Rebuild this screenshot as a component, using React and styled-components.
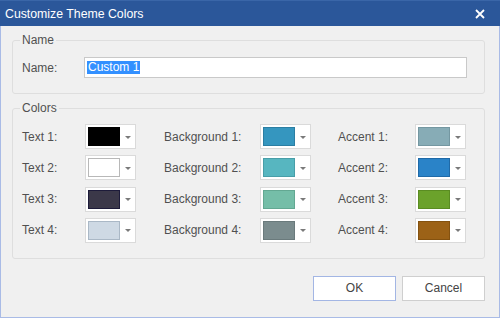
import React from "react";
import styled, { createGlobalStyle } from "styled-components";

const GlobalStyle = createGlobalStyle`
    html, body {
        margin: 0;
        padding: 0;
        background: #f0f0f0;
    }
    body {
        font-family: "Liberation Sans", Arial, sans-serif;
        font-size: 12px;
        color: #505050;
    }
`;

const Window = styled.div`
    width: 500px;
    height: 318px;
    box-sizing: border-box;
    display: flex;
    flex-direction: column;
    background: #f0f0f0;
    border: 1px solid #a9bbe6;
    border-top: none;
`;

const TitleBar = styled.div`
    height: 26px;
    margin: 0 -1px;
    display: flex;
    align-items: center;
    justify-content: space-between;
    padding: 0 15px 0 5px;
    background: #2b579a;
    border-top: 1px solid #3a66a8;
    box-sizing: border-box;
    color: #fff;
    font-size: 12.3px;
`;

const CloseButton = styled.svg`
    width: 10px;
    height: 10px;
    display: block;
`;

const Body = styled.div`
    flex: 1;
    display: flex;
    flex-direction: column;
    padding: 7px 14px 0 11px;
`;

const Group = styled.fieldset`
    margin: ${(p) => (p.$first ? "0" : "7px")} 0 0 0;
    padding: ${(p) => p.$top}px 0 15px 9px;
    border: 1px solid #dedede;
    border-radius: 3px;
    min-width: 0;
`;

const Legend = styled.legend`
    padding: 0 2px;
    margin-left: -2px;
    line-height: 14px;
    font-size: 12px;
    color: #505050;
`;

const NameRow = styled.div`
    display: grid;
    grid-template-columns: 62px 383px;
    align-items: center;
`;

const Label = styled.span`
    white-space: nowrap;
`;

const Input = styled.div`
    height: 21px;
    box-sizing: border-box;
    border: 1px solid #c9c9c9;
    background: #fff;
    display: flex;
    align-items: center;
    padding-left: 2px;
`;

const Selected = styled.span`
    background: #3390ff;
    color: #fff;
    line-height: 13px;
    padding: 0 1px;
`;

const ColorGrid = styled.div`
    display: grid;
    grid-template-columns: 63px 79px 96px 78px 77px 51px;
    grid-auto-rows: 25px;
    row-gap: 6.33px;
    align-items: center;
`;

const Picker = styled.div`
    width: 51px;
    height: 25px;
    box-sizing: border-box;
    border: 1px solid #dadada;
    background: #fff;
    display: flex;
    align-items: center;
    padding-left: 2px;
    gap: 5px;
`;

const Swatch = styled.div`
    width: 32px;
    height: 19px;
    box-sizing: border-box;
    background: ${(p) => p.$color};
    border: 1px solid ${(p) => p.$edge};
`;

const Arrow = styled.div`
    width: 0;
    height: 0;
    border-left: 3px solid transparent;
    border-right: 3px solid transparent;
    border-top: 3px solid #7a7a7a;
    margin-top: 1px;
`;

const Footer = styled.div`
    display: flex;
    justify-content: flex-end;
    gap: 6px;
    margin-top: 17px;
`;

const Button = styled.button`
    width: 83px;
    height: 25px;
    background: #fff;
    border: 1px solid ${(p) => (p.$primary ? "#a3b6e4" : "#cfcfcf")};
    font-family: "Liberation Sans", Arial, sans-serif;
    font-size: 12px;
    color: #444;
    padding: 0;
`;

const rows = [
    [
        ["Text 1:", "#000000", "#000000"],
        ["Background 1:", "#3596bf", "#2b7ea3"],
        ["Accent 1:", "#87acb6", "#7497a1"],
    ],
    [
        ["Text 2:", "#ffffff", "#b8b8b8"],
        ["Background 2:", "#57b6c0", "#489ea8"],
        ["Accent 2:", "#2a83c8", "#1f6aa8"],
    ],
    [
        ["Text 3:", "#3b3849", "#1d1b3a"],
        ["Background 3:", "#75bea8", "#63a892"],
        ["Accent 3:", "#6ba22b", "#5a8c22"],
    ],
    [
        ["Text 4:", "#ced9e4", "#aab8c6"],
        ["Background 4:", "#7b8c8e", "#6a7a7c"],
        ["Accent 4:", "#9c6217", "#845210"],
    ],
];

const ColorPicker = ({ color, edge }) => (
    <Picker>
        <Swatch $color={color} $edge={edge} />
        <Arrow />
    </Picker>
);

const App = () => {
    return (
        <>
            <GlobalStyle />
            <Window>
                <TitleBar>
                    <span>Customize Theme Colors</span>
                    <CloseButton viewBox="0 0 10 10">
                        <path d="M1 1 L9 9 M9 1 L1 9" stroke="#fff" strokeWidth="1.8" />
                    </CloseButton>
                </TitleBar>
                <Body>
                    <Group $first $top={10}>
                        <Legend>Name</Legend>
                        <NameRow>
                            <Label>Name:</Label>
                            <Input>
                                <Selected>Custom 1</Selected>
                            </Input>
                        </NameRow>
                    </Group>
                    <Group $top={9}>
                        <Legend>Colors</Legend>
                        <ColorGrid>
                            {rows.map((row) =>
                                row.map(([label, color, edge]) => (
                                    <React.Fragment key={label}>
                                        <Label>{label}</Label>
                                        <ColorPicker color={color} edge={edge} />
                                    </React.Fragment>
                                ))
                            )}
                        </ColorGrid>
                    </Group>
                    <Footer>
                        <Button $primary>OK</Button>
                        <Button>Cancel</Button>
                    </Footer>
                </Body>
            </Window>
        </>
    );
};

export default App;
